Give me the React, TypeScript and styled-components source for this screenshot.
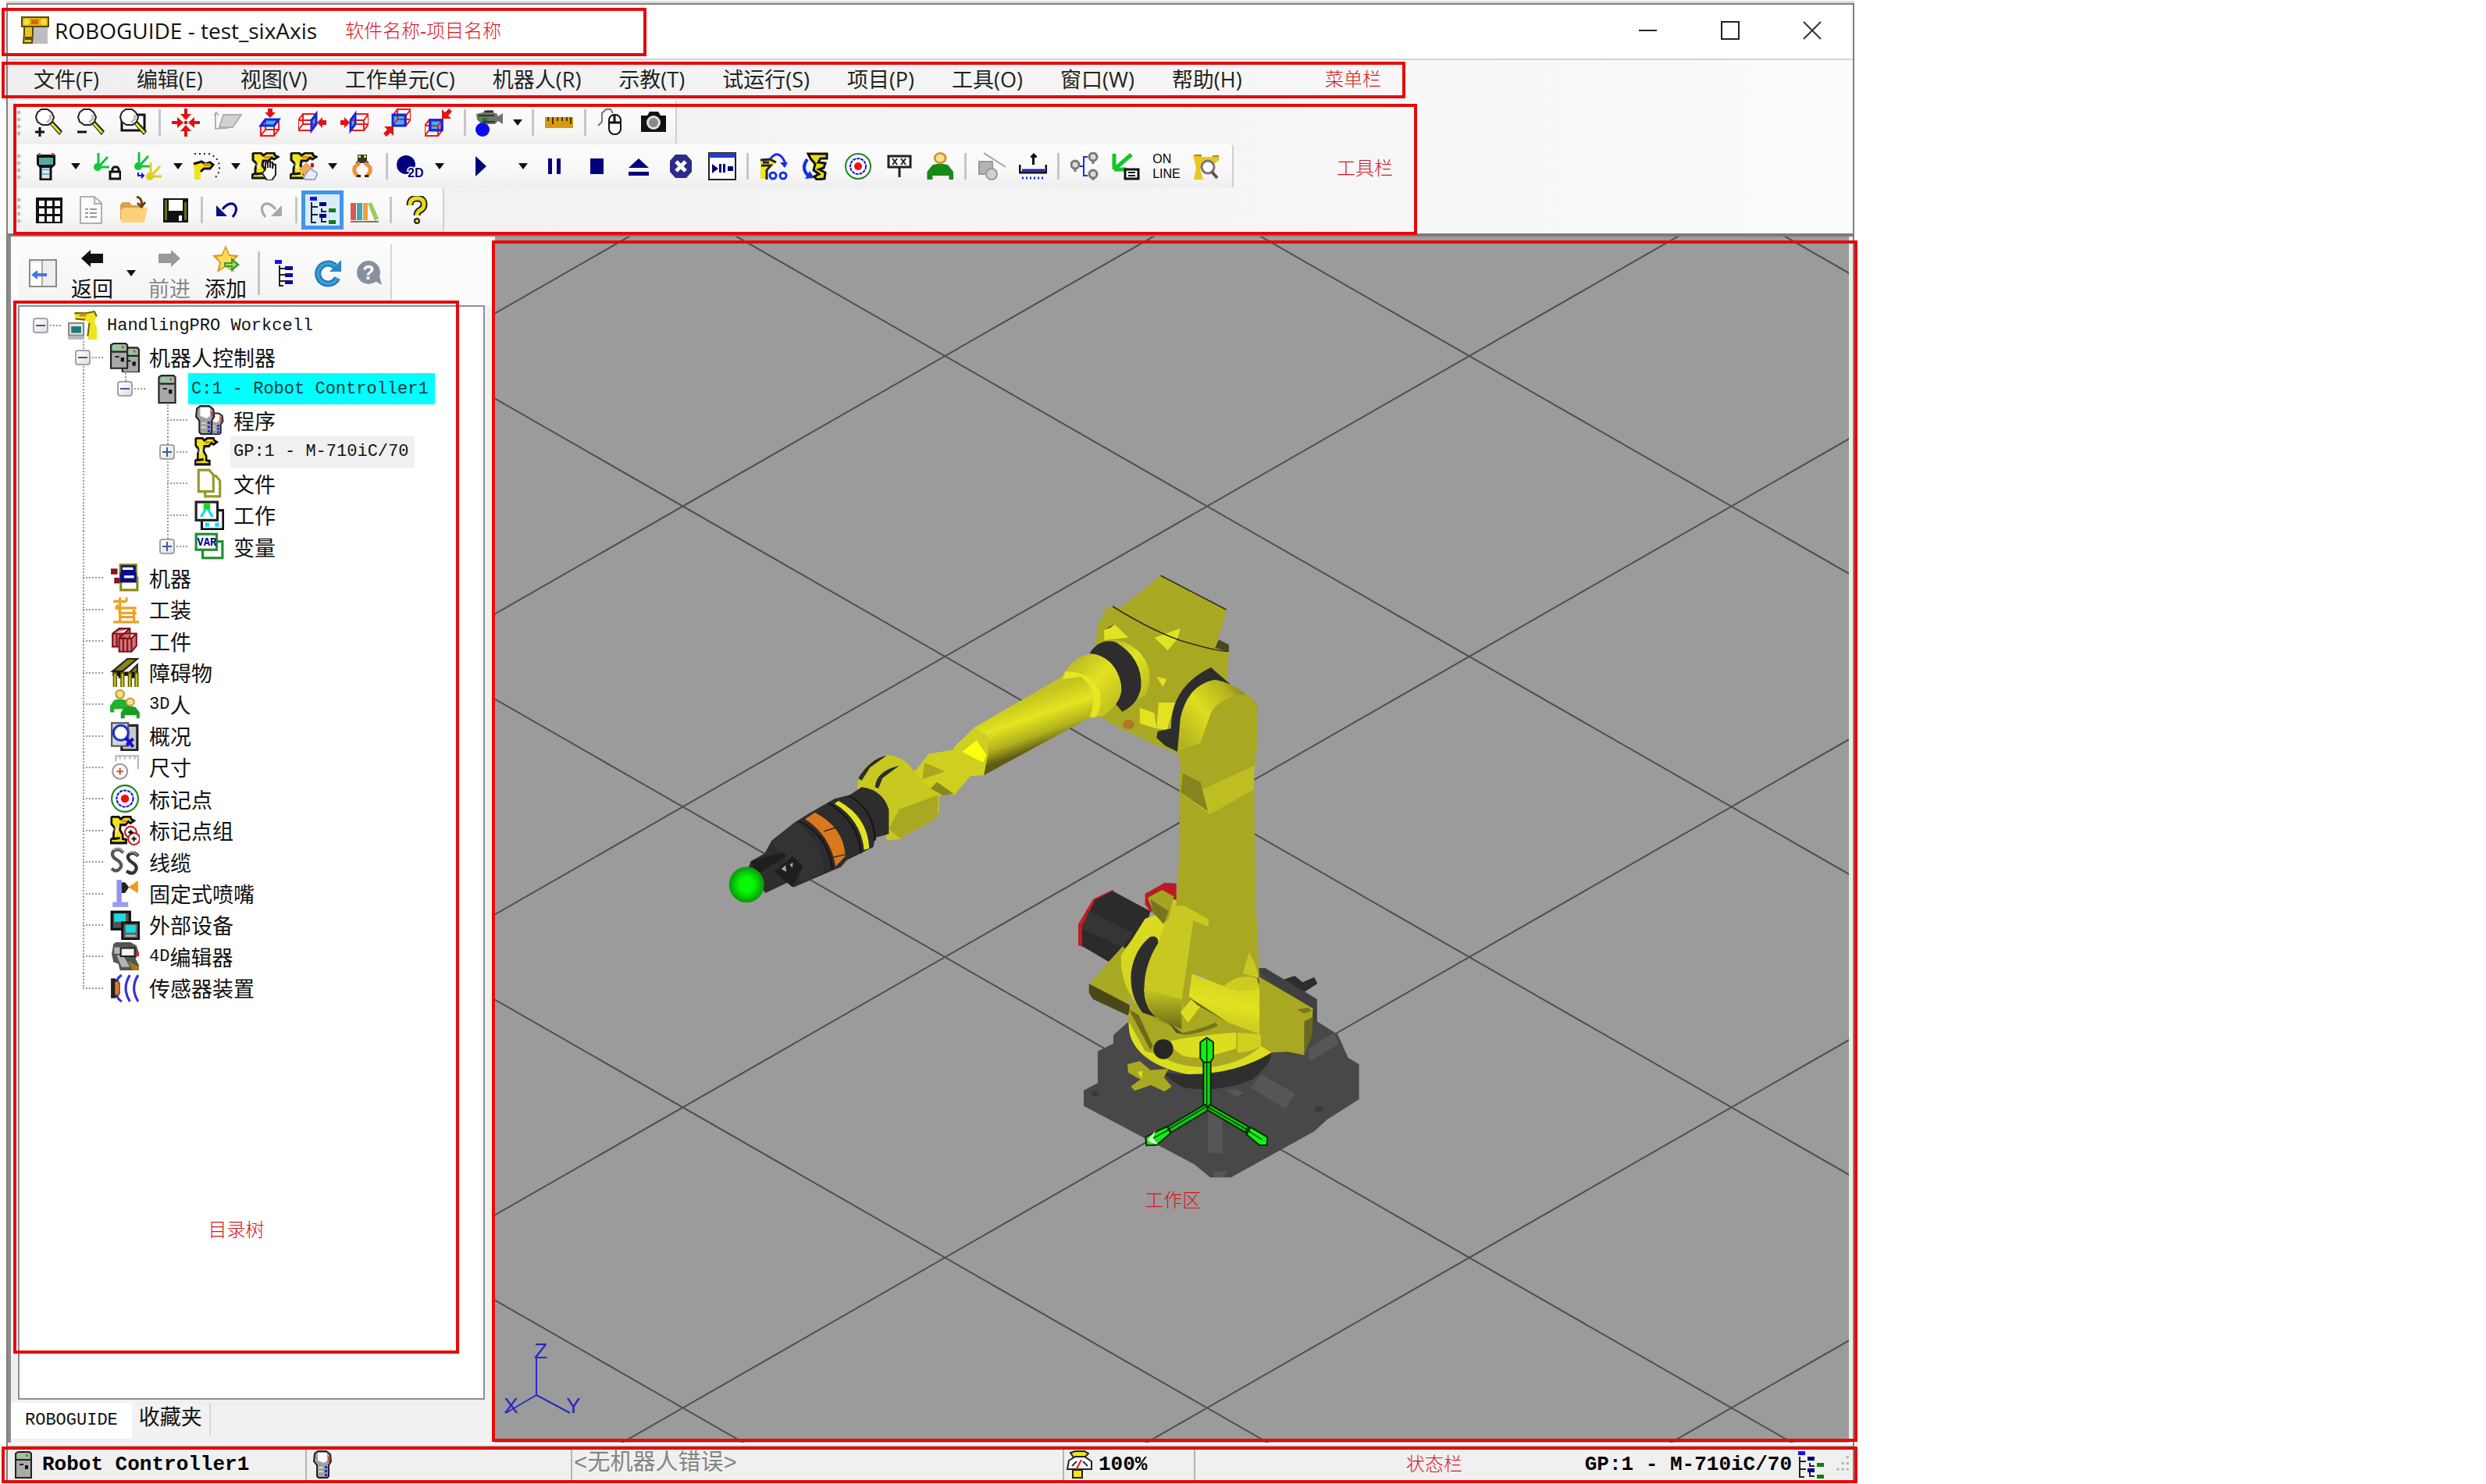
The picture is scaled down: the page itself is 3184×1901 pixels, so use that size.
import React, { ReactNode } from "react";
import styled, { createGlobalStyle, css } from "styled-components";

const UI = `"Open Sans", "Noto Sans CJK SC", sans-serif`;
const FIXED = `"Liberation Mono", "Noto Sans CJK SC", monospace`;
const RED = "#e60a0a";

const Global = createGlobalStyle`
  *, *::before, *::after { box-sizing: border-box; }
  body { margin: 0; background: #fff; overflow: hidden; }
  button { border: 0; padding: 0; margin: 0; background: none; font: inherit; color: inherit; cursor: pointer; }
  ul { list-style: none; margin: 0; padding: 0; }
`;

/* ---------- window frame ---------- */

const Desktop = styled.div`
  min-height: 100vh;
  padding: 4px 809px 2px 8px;
  display: flex;
  background: #fff;
  color: #1a1a1a;
  font-family: ${UI};
`;

const AppWindow = styled.div`
  flex: 1;
  min-width: 0;
  display: flex;
  flex-direction: column;
  border: 2px solid #7f7f7f;
  border-bottom: 0;
  box-shadow: 0 -3px 0 #dedede;
`;

const Callout = styled.div<{ $t?: number; $l?: number; $r?: number; $b?: number; $w?: number; $h?: number }>`
  position: absolute;
  pointer-events: none;
  border: 4px solid ${RED};
  z-index: 2;
  ${(p) => p.$t !== undefined && css`top: ${p.$t}px;`}
  ${(p) => p.$l !== undefined && css`left: ${p.$l}px;`}
  ${(p) => p.$r !== undefined && css`right: ${p.$r}px;`}
  ${(p) => p.$b !== undefined && css`bottom: ${p.$b}px;`}
  ${(p) => p.$w !== undefined && css`width: ${p.$w}px;`}
  ${(p) => p.$h !== undefined && css`height: ${p.$h}px;`}
`;

const CalloutText = styled.span`
  font-family: "Liberation Serif", "Noto Sans CJK SC", serif;
  font-weight: 300;
  font-size: 24px;
  line-height: 28px;
  color: #d8141c;
  white-space: nowrap;
`;

const CalloutRow = styled(Callout)<{ $pad: number }>`
  display: flex;
  justify-content: flex-end;
  align-items: center;
  padding: 0 ${(p) => p.$pad}px 2px 0;
`;

const CalloutColumn = styled(Callout)<{ $pad: number }>`
  display: flex;
  justify-content: center;
  align-items: flex-end;
  padding-bottom: ${(p) => p.$pad}px;
`;

const TitleBar = styled.header`
  position: relative;
  display: flex;
  align-items: center;
  height: 71px;
  padding: 0 0 4px 17px;
  gap: 7px;
  border-bottom: 2px solid #d4d4d4;
  background: #fff;
`;

const Title = styled.h1`
  margin: 0;
  font-size: 28px;
  font-weight: 400;
  line-height: 40px;
  color: #111;
`;

const WindowButtons = styled.div`
  margin-left: auto;
  display: flex;
`;

const WindowButton = styled.button`
  width: 105px;
  height: 64px;
  display: flex;
  align-items: center;
  justify-content: center;
`;

const Chrome = styled.div`
  position: relative;
  padding-bottom: 2px;
  background: linear-gradient(90deg, #efefef, #f6f6f6 70%, #fbfbfb);
  border-bottom: 4px solid #7c7c7c;
`;

const MenuBar = styled.nav`
  display: flex;
  height: 52px;
  padding: 0 0 2px 9px;
  align-items: center;
`;

const MenuButton = styled.button`
  padding: 0 24px;
  font-size: 27px;
  line-height: 40px;
  color: #222;
  white-space: nowrap;
`;

/* ---------- tool bars ---------- */

const ToolStrip = styled.div<{ $end?: number }>`
  display: flex;
  align-items: center;
  width: max-content;
  height: 56px;
  margin-left: 10px;
  padding-right: ${(p) => p.$end ?? 0}px;
  background: linear-gradient(180deg, #fcfcfc, #f8f8f8 60%, #eeeeee);
  border-right: 2px solid #cfcfcf;
  border-radius: 4px;
`;

const Grip = styled.span`
  width: 16px;
  height: 34px;
  background: radial-gradient(circle at 4px 4px, #bdbdbd 2px, transparent 3px) 0 0 / 16px 9px repeat-y;
`;

const ToolButton = styled.button<{ $w?: number; $active?: boolean }>`
  width: ${(p) => p.$w ?? 54}px;
  height: 50px;
  display: flex;
  align-items: center;
  justify-content: center;
  flex: none;
  ${(p) => p.$active && css`
    background: #dcebfa;
    border: 5px solid #3f97e8;
  `}
`;

const Divider = styled.span<{ $h?: number }>`
  width: 13px;
  height: ${(p) => p.$h ?? 34}px;
  flex: none;
  background: linear-gradient(#c6c6c6, #c6c6c6) center / 3px 100% no-repeat;
`;

const OnLine = styled.span`
  display: flex;
  flex-direction: column;
  align-items: flex-start;
  font-family: "Liberation Sans", sans-serif;
  font-size: 16px;
  line-height: 19px;
  color: #000;
`;

/* ---------- main area ---------- */

const Main = styled.main`
  flex: 1;
  display: flex;
  min-height: 0;
`;

const SidePanel = styled.aside`
  width: 620px;
  flex: none;
  display: flex;
  flex-direction: column;
  background: #f0f0f0;
  border-left: 4px solid #8c8c8c;
`;

const PanelHead = styled.div`
  height: 88px;
  padding: 10px 0 0 9px;
  background: #fcfcfc;
`;

const PanelStrip = styled.div`
  display: flex;
  align-items: center;
  width: max-content;
  height: 74px;
  padding-left: 5px;
  background: linear-gradient(180deg, #fcfcfc, #f4f4f4);
  border-right: 2px solid #d6d6d6;
`;

const LabeledButton = styled.button<{ $muted?: boolean }>`
  width: 72px;
  height: 72px;
  display: flex;
  flex-direction: column;
  align-items: center;
  justify-content: space-between;
  font-size: 27px;
  line-height: 32px;
  color: ${(p) => (p.$muted ? "#8a8a8a" : "#111")};
`;

const TreeBox = styled.div`
  position: relative;
  flex: 1;
  margin: 0 9px;
  padding-top: 4px;
  border: 2px solid #8b9098;
  background: #fff;
`;

const Tree = styled.ul`
  display: grid;
  grid-auto-rows: 1fr;
  height: 889px;
`;

const TreeRow = styled.li`
  display: flex;
  align-items: center;
  min-height: 0;
`;

const dotsV = "repeating-linear-gradient(180deg, #9a9a9a 0 2px, transparent 2px 4px)";
const dotsH = "repeating-linear-gradient(90deg, #9a9a9a 0 2px, transparent 2px 4px)";

const Rail = styled.span<{ $v: "none" | "full" | "half"; $h?: boolean }>`
  width: 54px;
  align-self: stretch;
  flex: none;
  display: flex;
  align-items: center;
  justify-content: center;
  background-repeat: no-repeat;
  background-image: ${(p) => (p.$v === "none" ? "none" : dotsV)}, ${(p) => (p.$h ? dotsH : "none")};
  background-size: 2px ${(p) => (p.$v === "full" ? "100%" : "50%")}, 50% 2px;
  background-position: 27px 0, right center;
`;

const Expander = styled.button`
  width: 20px;
  height: 20px;
  display: flex;
  align-items: center;
  justify-content: center;
  border: 2px solid #a4a4a4;
  border-radius: 4px;
  background: linear-gradient(135deg, #fff, #dfdfdf);
`;

const TreeIcon = styled.span`
  width: 54px;
  height: 38px;
  flex: none;
  display: flex;
  align-items: center;
  justify-content: center;
`;

const TreeLabel = styled.span<{ $tone?: "sel" | "soft" }>`
  display: flex;
  align-items: center;
  align-self: stretch;
  padding: 0 8px 0 4px;
  font-family: ${FIXED};
  font-size: 27px;
  color: ${(p) => (p.$tone === "sel" ? "#0c3a3a" : "#111")};
  white-space: pre;
  background: ${(p) => (p.$tone === "sel" ? "#00ffff" : p.$tone === "soft" ? "#f0f0f0" : "transparent")};
`;

const Latin = styled.span`
  font-size: 22px;
`;

const Tabs = styled.div`
  display: flex;
  height: 55px;
  padding-top: 4px;
  align-items: flex-start;
`;

const Tab = styled.button<{ $on?: boolean }>`
  height: ${(p) => (p.$on ? 46 : 42)}px;
  padding: 0 ${(p) => (p.$on ? 18 : 9)}px;
  font-family: ${FIXED};
  font-size: ${(p) => (p.$on ? 22 : 27)}px;
  line-height: 36px;
  color: #111;
  background: ${(p) => (p.$on ? "#fff" : "#f2f2f2")};
  border-right: ${(p) => (p.$on ? 0 : 2)}px solid #d8d8d8;
`;

const Workspace = styled.section`
  position: relative;
  flex: 1;
  min-width: 0;
  display: flex;
  background: #9b9b9b;
  border-left: 4px solid #f4f4f4;
  border-right: 5px solid #ececec;
`;

const Scene = styled.svg`
  flex: 1;
  min-width: 0;
  display: block;
`;

/* ---------- status bar ---------- */

const StatusBar = styled.footer`
  position: relative;
  display: flex;
  height: 51px;
  padding: 2px 0 2px;
  background: #f0f0f0;
  border-top: 2px solid #f8f8f8;
`;

const StatusCell = styled.div<{ $w?: number; $dim?: boolean }>`
  ${(p) => (p.$w ? css`width: ${p.$w}px;` : css`flex: 1; justify-content: flex-end;`)}
  display: flex;
  align-items: center;
  gap: 6px;
  padding-left: 2px;
  border-top: 2px solid #b4b4b4;
  border-right: 2px solid ${(p) => (p.$w ? "#b4b4b4" : "transparent")};
  font-family: ${FIXED};
  font-size: ${(p) => (p.$dim ? 29 : 26)}px;
  font-weight: ${(p) => (p.$dim ? 400 : 700)};
  line-height: 36px;
  color: ${(p) => (p.$dim ? "#848484" : "#000")};
  white-space: pre;
`;

/* ---------- icons ---------- */

const box = (x: number, y: number, w: number, h: number, f: string, s?: string, sw = 2) => (
  <rect x={x} y={y} width={w} height={h} fill={f} stroke={s} strokeWidth={s ? sw : undefined} />
);
const line = (d: string, s = "#000", w = 2, f = "none") => <path d={d} stroke={s} strokeWidth={w} fill={f} />;
const fill = (d: string, f: string) => <path d={d} fill={f} />;

const lens = (
  <>
    <path d="M17 18l5-3 13 14-4 5z" fill="#222" />
    <path d="M20 20l2-2 11 12-2 2z" fill="#f2ea18" />
    <path d="M8 1h8l5 4 3 6-2 6-5 4H9l-6-4-2-6 2-6z" fill="#fff" stroke="#222" strokeWidth="2" />
    <path d="M19 8l1 5-5 5" stroke="#bbb" strokeWidth="3" fill="none" />
  </>
);

const miniBot = (
  <>
    <path d="M2 2l2-1h8l3 3 5-3h9l1 3 4 2-5 3-3-2-4 4h-7l-1 6 4 6v5l5 1v4H1v-4l4-2v-6l2-6-5-5z" fill="#f0e41c" stroke="#111" strokeWidth="3" />
    <path d="M16 5h8v3h-8z" fill="#e58a18" />
    <path d="M7 12l5 3-2 6-4-2z" fill="#fff" opacity=".5" />
    <path d="M5 28l9-1" stroke="#111" strokeWidth="3" />
  </>
);

const cube = (x: number, y: number, face: "top" | "right" | "left" | "back" | "mid") => {
  const f = {
    top: "M0 8l6-8h17l-6 8z",
    right: "M17 8l6-8v13l-6 8z",
    left: "M0 8l6-8v13l-6 8z",
    back: "M0 7h16v14H0z",
    mid: "M7 1h15v13H7z",
  }[face];
  return (
    <g transform={`translate(${x} ${y})`}>
      <path d={f} fill="#39b4ff" />
      <path d="M0 8h17v13H0zM6 0h17v13H6zM0 8l6-8M17 8l6-8M17 21l6-8M0 21l6-8" stroke="#f01818" strokeWidth="2" fill="none" />
      <path d={f} stroke="#1226e0" strokeWidth="3" fill="none" />
    </g>
  );
};

const cabinet = (x: number, y: number, h = 30) => (
  <g transform={`translate(${x} ${y})`}>
    <path d={`M1 3l3-2h15l2 2v${h}H1z`} fill="#a9a9a9" stroke="#222" strokeWidth="2" />
    <rect x="4" y="3" width="14" height="6" fill="#8ccf9a" />
    <rect x="14" y="4" width="3" height="3" fill="#e04848" />
    <path d="M2 11h18M6 17h5" stroke="#222" strokeWidth="2" />
    <rect x="13" y="18" width="4" height="5" fill="#111" />
  </g>
);

const pendant = (x: number, y: number) => (
  <g transform={`translate(${x} ${y})`}>
    <path d="M2 4l4-3h11l5 4 1 9-3 5v14l-2 2H7l-2-2V19l-4-5z" fill="#a0a0a0" stroke="#222" strokeWidth="2" />
    <path d="M6 3h12v10l-4 3-8-3z" fill="#fff" />
    <path d="M19 7l4 4-3 5z" fill="#e02828" />
    <path d="M15 20h3v3h-3zM15 25h3v3h-3zM15 30h3v3h-3z" fill="#2222e8" />
    <path d="M7 22h6M7 27h6" stroke="#d8d8d8" strokeWidth="2" />
  </g>
);

const person = (x: number, y: number, c = "#168a16") => (
  <g transform={`translate(${x} ${y})`}>
    <path d="M0 28v-8l5-7 4-1h6l4 1 5 7v8h-4v-4H5v4z" fill={c} />
    <circle cx="12" cy="6" r="5" fill="#ffe08a" stroke="#c89434" strokeWidth="2" />
  </g>
);

const treeGlyph = (
  <>
    <path d="M4 8v26h6M4 14h8M4 24h8M17 16v4h6M17 26v7h6" stroke="#222" strokeWidth="2" fill="none" />
    {box(2, 1, 9, 5, "#1414e8")}
    {box(14, 8, 9, 5, "#00008a")}
    {box(26, 16, 9, 5, "#108010")}
    {box(14, 23, 9, 5, "#00008a")}
    {box(26, 31, 9, 5, "#108010")}
  </>
);

const frame3 = (x: number, y: number, c: string) => (
  <g transform={`translate(${x} ${y})`}>
    <path d="M7 18V0M7 18L19 5M7 18h14" stroke={c} strokeWidth="3" fill="none" />
    <circle cx="6" cy="18" r="5" fill={c} />
  </g>
);

const target = (
  <>
    <circle cx="18" cy="18" r="16" fill="#fff" stroke="#168a16" strokeWidth="2" />
    <circle cx="18" cy="18" r="10" fill="none" stroke="#1414e0" strokeWidth="2" strokeDasharray="4 1" />
    <circle cx="18" cy="18" r="5" fill="#f01010" />
  </>
);

const icons: Record<string, ReactNode> = {
  logo: (
    <>
      {box(10, 5, 24, 30, "#bdbdbd")}
      {box(1, 1, 34, 12, "#e0b414", "#5c4a10")}
      {box(13, 4, 9, 6, "#d06a10")}
      <circle cx="7" cy="7" r="4" fill="#f8dc3c" />
      <circle cx="29" cy="7" r="4" fill="#f8dc3c" />
      <path d="M4 13h11v9l-1 12H3l1-12z" fill="#e8c81c" stroke="#5c4a10" strokeWidth="2" />
      {box(5, 26, 9, 4, "#5c4a10")}
    </>
  ),
  zoomIn: <>{lens}{line("M0 30h12M6 24v12", "#111", 3)}</>,
  zoomOut: <>{lens}{line("M0 30h12", "#111", 3)}</>,
  zoomWin: <>{box(3, 8, 29, 20, "#fff", "#111", 3)}{lens}</>,
  center: fill("M16 0h4v7h5l-7 8-7-8h5zM16 36h4v-7h5l-7-8-7 8h5zM0 16v4h7v5l8-7-8-7v5zM36 16v4h-7v5l-8-7 8-7v5zM16 16h4v4h-4z", "#d81414"),
  plane: <>{fill("M12 8h24L24 24H6z", "#d2d2d2")}{line("M12 8h23L24 24H7zM2 6v20l16-1M0 9l3-4 3 4", "#b0b0b0")}</>,
  vTop: <>{fill("M15 0h6v5h4l-7 7-7-7h4z", "#e01414")}{cube(6, 14, "top")}</>,
  vRight: <>{cube(0, 7, "right")}{fill("M36 15v6h-5v4l-7-7 7-7v4z", "#e01414")}</>,
  vLeft: <>{cube(13, 7, "left")}{fill("M0 15v6h5v4l7-7-7-7v4z", "#e01414")}</>,
  vFront: <>{cube(13, 1, "back")}{fill("M2 23h12v12l-4-4-5 5-4-4 5-5z", "#e01414")}</>,
  vBack: <>{cube(0, 14, "mid")}{fill("M34 13H22V1l4 4 5-5 4 4-5 5z", "#e01414")}</>,
  cam: (
    <>
      {fill("M2 7l9-2 3-3h9l2 4h3l2 4 6-4v14l-6-4-4 4H9l-6-6z", "#6c7468")}
      {line("M12 4h12M5 9h20M10 17h16", "#333")}
      {fill("M10 12h6v4h-6z", "#1c7a1c")}
      <circle cx="10" cy="27" r="9" fill="#0a0af0" />
    </>
  ),
  ruler: <>{box(0, 11, 36, 14, "#d69a10")}{line("M4 11v5M10 11v9M16 11v5M22 11v5M28 11v5M33 11v9", "#4a3408")}</>,
  mouse: <>{line("M1 22l5-5V6l5-5h6l3 5", "#777")}<rect x="15" y="8" width="15" height="25" rx="7" fill="#fff" stroke="#111" strokeWidth="2" />{line("M15 18h15M22 8v10", "#111", 3)}</>,
  photo: <>{fill("M2 9h8l3-5h11l3 5h7v21H2z", "#111")}<circle cx="18" cy="18" r="9" fill="#ddd" /><circle cx="18" cy="18" r="6" fill="#8a8a8a" /></>,
  tp: (
    <>
      {box(10, 17, 13, 18, "#cfe8f4", "#111", 3)}
      {line("M12 22h9M12 28h9", "#8ab")}
      {fill("M5 3h24v13l-4 4H9l-4-4z", "#111")}
      {box(8, 7, 18, 9, "#5aa8a4")}
      {box(24, 1, 3, 3, "#e03030")}
      {box(7, 1, 3, 3, "#777")}
    </>
  ),
  lockFrame: <>{frame3(0, 1, "#10c83c")}{line("M25 25v-4l2-2h4l2 2v4", "#111", 3)}{box(22, 25, 13, 9, "#fff", "#111", 3)}</>,
  twoFrames: <>{frame3(0, 0, "#10c83c")}{frame3(15, 13, "#dcd21c")}{line("M6 26v4h7M10 27l3 3-3 3", "#1414e0")}</>,
  arc: <><path d="M2 2h18q14 4 14 18 0 8-7 14" stroke="#222" strokeWidth="2" strokeDasharray="2 4" fill="none" /><path d="M1 16l10-3 12 1 4 4-5 3h-8l-4 4v10H2V24l-1-4z" fill="#f0e41c" />{line("M1 15l10-3 5 3 6-2 4 3-4 5h-8l-4 4", "#111", 3)}{box(14, 14, 8, 4, "#e58a18")}</>,
  hand: <>{miniBot}<path d="M18 22V14l3-1v7-8h3v8-7h3v8l1-6 3 1v13l-5 7h-6l-6-9z" fill="#fff" stroke="#222" strokeWidth="2" /></>,
  carry: <>{miniBot}<path d="M12 22l9-9 9 7-9 12z" fill="#f0a860" /><path d="M18 32l8-11 10 6-4 8H20z" fill="#e8ecff" stroke="#98a4d8" strokeWidth="2" />{box(27, 14, 4, 5, "#d01414")}</>,
  gripper: <>{fill("M12 3h12v8l3 3H9l3-3z", "#333")}{fill("M13 4h3v3h-3zM20 4h3v3h-3z", "#f0e41c")}<path d="M15 14q-9 4-7 11l4 6M21 14q9 4 7 11l-4 6" stroke="#f09038" strokeWidth="5" fill="none" />{box(11, 29, 5, 3, "#222")}{box(21, 29, 5, 3, "#222")}</>,
  blob2d: <><circle cx="12" cy="16" r="12" fill="#00007c" /><text x="14" y="32" fontSize="16" fontWeight="700" fontFamily="Liberation Sans, sans-serif" fill="#00007c" stroke="#fff" strokeWidth="3" paintOrder="stroke">2D</text></>,
  play: fill("M11 5l14 13-14 13z", "#00007c"),
  pause: fill("M10 8h5v20h-5zM21 8h5v20h-5z", "#00007c"),
  stop: box(10, 8, 17, 20, "#00007c"),
  eject: fill("M18 8l13 12H5zM5 25h26v5H5z", "#00007c"),
  abort: <>{fill("M11 3h14l7 8v14l-7 8H11l-7-8V11z", "#2c2c8a")}{line("M12 12l12 12M24 12L12 24", "#fff", 5)}</>,
  runPanel: <>{box(1, 1, 34, 34, "#fff", "#222")}{box(1, 1, 34, 6, "#2440c8")}{fill("M5 15l8 6-8 6zM14 15h3v11h-3zM19 15h3v11h-3zM25 18h7v6h-7z", "#00007c")}</>,
  jog1: <>{fill("M1 11l13-1 6 4-5 5H8v15H1z", "#f0e41c")}{line("M1 10l12-1 8 4M2 17h12l-5 6v12M4 13h8", "#222", 3)}<path d="M14 8q10-12 18 4v6" stroke="#1430e8" strokeWidth="3" fill="none" />{fill("M26 13h10l-4 7z", "#1430e8")}<circle cx="17" cy="30" r="4" fill="#fff" stroke="#1430e8" strokeWidth="3" /><circle cx="30" cy="30" r="4" fill="#fff" stroke="#1430e8" strokeWidth="3" /></>,
  jog2: <>{line("M7 9q-9 12 2 22", "#1430e8", 4)}{fill("M4 34l12-1-6-9z", "#1430e8")}<path d="M8 2h24v6h-8l-3 5 9 1-2 6-6 2 8 4-1 8-10 1-3-4 6-3-7-5 2-8-6-7z" fill="#e8dc1c" stroke="#111" strokeWidth="3" /></>,
  target,
  sign: <>{box(4, 5, 28, 14, "#fff", "#222", 3)}{line("M9 8l6 8M15 8l-6 8M20 8l6 8M26 8l-6 8", "#222")}{line("M18 19v13", "#222", 3)}</>,
  person: <g transform="scale(1.4 1.25)">{person(1, 0)}</g>,
  shapes: <>{box(2, 12, 17, 16, "#b4b4b4", "#999")}<circle cx="18" cy="28" r="7" fill="#d0d0d0" stroke="#999" strokeWidth="2" />{line("M8 1l28 18", "#a4a4a4")}</>,
  measure: <>{fill("M15 5l4-4 4 4v2h-3v9h-3V7h-2z", "#111")}{line("M1 16v10h34V16", "#111", 3)}{line("M4 23h29", "#2222a8", 3)}<path d="M4 33h30" stroke="#1430e8" strokeWidth="3" strokeDasharray="2 3" /></>,
  links: <>{line("M22 6h-5v24h5M17 18h-5", "#2030d8")}{[[6, 16], [29, 6], [29, 28]].map(([x, y]) => <g key={x + y}><circle cx={x} cy={y} r="5" fill="#ddd" stroke="#777" strokeWidth="3" /><path d={`M${x} ${y + 4}v5`} stroke="#777" strokeWidth="3" /></g>)}</>,
  frameKey: <>{line("M3 2v20M3 22L25 3M3 22h16", "#12c822", 5)}{box(17, 22, 17, 12, "#fff", "#111", 3)}{line("M21 26h9M21 30h9", "#111")}</>,
  botFind: <>{fill("M1 3h9l3 3h12l8-3 2 7-6 4H14l-4 8 4 13H2l3-15z", "#e8c81c")}{line("M3 4h9M26 5h8", "#a88a10")}<circle cx="20" cy="19" r="8" fill="#fff" stroke="#777" strokeWidth="3" />{line("M25 25l7 8", "#555", 4)}</>,
  grid: <>{box(1, 2, 34, 33, "#111")}{[5, 15, 25].map((y) => [5, 15, 25].map((x) => <rect key={x + y * 9} x={x} y={y + 1} width="7" height="7" fill="#fff" />))}</>,
  doc: <>{line("M4 1h18l9 8v26H4zM22 1v9h9", "#b0b0b0", 2, "#fdfdfd")}{line("M10 17h4M16 17h9M10 22h4M16 22h9M10 27h4M16 27h9", "#9a9a9a")}</>,
  open: <>{fill("M1 11l3-3h9l3 4h15v8H5l-4 12z", "#dca048")}{fill("M2 34V18l4-3h30l-4 19z", "#ffd078")}{line("M22 1q8 2 6 12M23 9l5 5 5-6", "#6a4410", 3)}</>,
  save: <>{box(2, 3, 32, 31, "#111")}{box(9, 5, 18, 14, "#fff")}{fill("M4 5h3v26H4zM29 8h3v23h-3z", "#6c6c14")}{box(9, 24, 18, 9, "#111")}{box(22, 25, 4, 7, "#fff")}</>,
  undo: <>{fill("M3 12v14h14z", "#0c0c80")}{line("M11 17q8-10 15-6 6 6-2 16", "#0c0c80", 3)}</>,
  redo: <>{fill("M33 12v14H19z", "#a8a8a8")}{line("M25 17q-8-10-15-6-6 6 2 16", "#a8a8a8", 3)}</>,
  tree: treeGlyph,
  books: <>{box(0, 9, 7, 22, "#d85858")}{box(8, 9, 7, 22, "#40a8b0")}{box(16, 9, 6, 22, "#f0a038")}{fill("M22 10l5-2 9 21-5 3z", "#9ccc60")}{line("M0 33h36", "#8a7468")}</>,
  help: <>{line("M9 12q0-9 9-9t9 8q0 5-6 8-3 2-3 6", "#222", 9)}{line("M9 12q0-9 9-9t9 8q0 5-6 8-3 2-3 6", "#e8dc1c", 5)}<circle cx="18" cy="32" r="4" fill="#222" /><circle cx="18" cy="32" r="2" fill="#e8dc1c" /></>,
  dock: <>{box(1, 1, 34, 34, "#eee", "#8a8a8a")}{box(2, 5, 15, 29, "#fff")}{line("M17 2v32", "#aaa")}{fill("M3 20l8-6v4h12v4H11v4z", "#3c78e8")}</>,
  star: <>{fill("M18 0l5 12 12 1-9 9 3 13-11-7-11 7 3-13-9-9 12-1z", "#d89a1c")}{fill("M18 4l4 10 8 1-6 7 2 9-8-5-8 5 2-9-6-7 8-1z", "#ffdc5c")}{fill("M16 22h9v-6l11 9-11 9v-6h-9z", "#3c9c2c")}{fill("M18 24h9v-3l5 4-5 4v-3h-9z", "#9ce070")}</>,
  list: <>{line("M11 8v26h5M11 12h8M11 20h8M11 28h8", "#222")}{box(5, 1, 9, 5, "#1414e8")}{box(18, 9, 10, 5, "#0c0ca0")}{box(18, 18, 10, 5, "#0c0ca0")}{box(18, 27, 10, 5, "#0c0ca0")}</>,
  refresh: <>{line("M28 9a13 13 0 1 0 3 15", "#1878b8", 8)}{line("M28 9a13 13 0 1 0 3 15", "#3c9cd8", 4)}{fill("M36 1v15H21z", "#2888c8")}</>,
  about: <><circle cx="17" cy="17" r="15" fill="#8890a0" /><path d="M24 27l10 6-3-11z" fill="#8890a0" /><text x="17" y="26" textAnchor="middle" fontSize="25" fontWeight="700" fontFamily="Liberation Sans, sans-serif" fill="#fff">?</text></>,
  workcell: <>{fill("M8 3h14l10-2 3 5-3 8 3 6v15H24l3-18-6-6-12-1z", "#f0e41c")}{line("M8 3h14l10-2 3 6M9 10l12 1M26 15l-2 16", "#6a6414")}{box(14, 3, 8, 4, "#d88818")}{box(1, 15, 18, 15, "#e4e4e4", "#888")}{box(4, 19, 12, 8, "#1c7c7c")}{box(0, 31, 20, 4, "#bbb")}</>,
  controllers: <>{cabinet(14, 5, 28)}{cabinet(0, 0, 28)}</>,
  cabinet: cabinet(7, 1, 31),
  programs: <><g transform="translate(14 9) scale(.9 .75)">{pendant(0, 0)}</g>{pendant(1, 0)}</>,
  pendant: pendant(6, 0),
  bot: <g transform="scale(.8 1)">{miniBot}</g>,
  files: <>{line("M13 9h13l5 6v19H13z", "#98982c", 3, "#fff")}{line("M5 2h13l5 6v20H5z", "#98982c", 3, "#fff")}</>,
  jobs: <>{box(9, 12, 26, 23, "#fff", "#111", 3)}{box(13, 27, 5, 5, "#10dcec")}{box(25, 27, 5, 5, "#10dcec")}{box(2, 2, 26, 22, "#fff", "#222", 3)}{line("M15 8l-7 12M15 8l7 12", "#10dcec", 3)}{box(11, 4, 8, 7, "#10e010")}</>,
  vars: <>{box(10, 12, 24, 20, "#fff", "#1c9030", 3)}{box(2, 3, 25, 19, "#fff", "#1c9030", 3)}<text x="15" y="17" textAnchor="middle" fontSize="13" fontWeight="700" fontFamily="Liberation Mono, monospace" fill="#00008a">VAR</text></>,
  machine: <>{box(1, 7, 8, 7, "#8a1414")}{box(5, 18, 8, 7, "#8a1414")}{box(12, 2, 20, 16, "#0c0c8a", "#8a8a14")}{box(13, 18, 20, 15, "#fff", "#8a8a14", 3)}{box(12, 12, 20, 12, "#0c0c8a")}{line("M15 7h13M17 17h12", "#fff", 3)}</>,
  fixture: line("M4 8h16M12 3v30M6 16h26M10 22h22M4 33h31M29 18v15M20 8v-5M12 27h17M8 12l4 8", "#f0a020", 3),
  part: <>{line("M3 9l8-6h13v15l-7 7H3zM3 9h14l7-6M17 9v16M8 10v14M12 10v14", "#7c1418", 2, "#d87078")}{line("M11 15l6-6h15v15l-6 7H11zM11 15h15l6-6M26 15v16M16 16v14M21 16v14", "#7c1418", 2, "#d87078")}</>,
  obstacle: <>{line("M3 16L21 1h12L15 16zM21 20L33 8v10", "#222", 2, "#8a8414")}{line("M3 19h31M10 22h6M24 22h6", "#111", 5)}{line("M6 17v18M15 17v18M24 17v18M32 17v18", "#5c5808", 5)}{line("M6 19v16M15 19v16M24 19v16M32 19v16", "#d8cc20", 2)}</>,
  people: <>{person(0, 0, "#1cb42c")}<g transform="translate(13 10) scale(.95 .9)">{person(0, 0, "#1c9c24")}</g></>,
  profile: <>{box(14, 5, 19, 30, "#c8c8c8", "#222", 3)}{box(2, 2, 20, 28, "#d8d8d8", "#555")}<circle cx="13" cy="14" r="9" fill="#fff" stroke="#1c34d8" strokeWidth="3" />{line("M19 20l9 11M28 21l-8 8", "#1414c8", 4)}</>,
  dim: <>{line("M7 11V4h27v16M12 4v4M18 4v4M24 4v4M30 4v4", "#b0b4c8")}<circle cx="12" cy="23" r="9" fill="#fff" stroke="#999" strokeWidth="2" />{line("M8 23h8M12 19v8", "#d05038")}</>,
  targetGroup: <><g transform="scale(.85 1)">{miniBot}</g><circle cx="25" cy="20" r="7" fill="#fff" stroke="#d01818" strokeWidth="2" /><circle cx="29" cy="28" r="7" fill="#fff" stroke="#d01818" strokeWidth="2" />{line("M22 20h6M25 17v6M26 28h6M29 25v6", "#111")}</>,
  cable: <>{line("M16 7q-6-7-12-2-4 6 5 11 8 6 2 11-4 4-9-1", "#555", 4)}{line("M34 11q-5-6-11-2-4 5 4 10 8 5 3 11-4 4-10-1", "#333", 4)}{line("M16 6q-6-7-12-2M33 10q-5-6-10-2", "#ccc", 1)}</>,
  nozzle: <>{box(8, 1, 6, 30, "#9494f0")}{box(3, 28, 19, 6, "#9c9cf4")}{fill("M14 4h4l5 6-5 7h-4z", "#222")}{fill("M22 10l12-8v15z", "#f09c18")}</>,
  device: <>{box(2, 2, 22, 21, "#555", "#111", 3)}{box(5, 4, 14, 10, "#18dce4")}{box(15, 15, 20, 20, "#666", "#111", 3)}{box(19, 18, 12, 9, "#18dce4")}{line("M19 31h12", "#bbb")}</>,
  editor4d: <>{fill("M4 3l3-2h18l7 4 3 9-4 7 4 8v6H12l-2-8-6-2-2-10z", "#555")}{fill("M5 7h18v8H5zM8 17h8l8 14H14z", "#b4b4b4")}{box(13, 8, 17, 10, "#f4f4f4", "#222")}{fill("M22 24l13 7v4h-8z", "#a87818")}{box(31, 13, 4, 5, "#d02828")}</>,
  sensor: <>{fill("M1 6h5l6 5v14l-6 5H1z", "#222")}{fill("M6 10h5v16H6z", "#d87c2c")}{line("M14 2q-6 4-5 8M14 34q-6-4-5-8M24 2q-10 16 0 32M34 2q-10 16 0 32", "#3434d8", 3)}</>,
  status: <><path d="M6 3l6-2h12l5 3-5 5H10z" fill="#f0e41c" stroke="#222" strokeWidth="2" /><path d="M4 13l8-5h12l9 6v10H2z" fill="#fff" stroke="#222" strokeWidth="2" />{line("M8 20l6-6M28 20l-6-6", "#333")}{line("M20 12l-7 13", "#e01818", 2)}{box(9, 25, 12, 10, "#f0e41c", "#222")}</>,
  sizeGrip: fill("M28 4h4v4h-4zM20 14h4v4h-4zM28 14h4v4h-4zM12 24h4v4h-4zM20 24h4v4h-4zM28 24h4v4h-4z", "#b4b4b4"),
};

const Icon = ({ name, size = 36 }: { name: string; size?: number }) => (
  <svg width={size} height={size} viewBox="0 0 36 36" aria-hidden="true">{icons[name]}</svg>
);

const Caret = () => (
  <svg width="12" height="8" viewBox="0 0 12 8" aria-hidden="true"><path d="M0 0h12L6 8z" fill="#111" /></svg>
);

type Tool = [string, string, number?] | "|" | "v";

const strips: { tools: Tool[]; end: number }[] = [
  {
    end: 1,
    tools: [["zoomIn", "放大"], ["zoomOut", "缩小"], ["zoomWin", "窗口缩放"], "|", ["center", "居中"], ["plane", "平面"], ["vTop", "俯视"], ["vRight", "右视"], ["vLeft", "左视"], ["vFront", "前视"], ["vBack", "后视"], "|", ["cam", "相机", 47], "v", "|", ["ruler", "测量"], "|", ["mouse", "鼠标"], ["photo", "截图"]],
  },
  {
    end: 8,
    tools: [["tp", "示教器", 47], "v", ["lockFrame", "锁定坐标"], ["twoFrames", "坐标", 50], "v", ["arc", "点动", 47], "v", ["hand", "手动", 50], ["carry", "搬运", 47], "v", ["gripper", "手爪", 50], "|", ["blob2d", "2D", 47], "v", ["play", "启动", 80], "v", ["pause", "暂停"], ["stop", "停止"], ["eject", "弹出"], ["abort", "中止"], ["runPanel", "运行面板", 52], "|", ["jog1", "移动机器人"], ["jog2", "旋转机器人"], ["target", "目标"], ["sign", "标签", 52], ["person", "人", 52], "|", ["shapes", "形状"], ["measure", "尺寸", 52], "|", ["links", "链接"], ["frameKey", "坐标输入", 52], ["online", "在线", 52], ["botFind", "查找", 50]],
  },
  {
    end: 6,
    tools: [["grid", "表格"], ["doc", "新建"], ["open", "打开"], ["save", "保存"], "|", ["undo", "撤销"], ["redo", "重做"], "|", ["tree", "目录树"], ["books", "库"], "|", ["help", "帮助"]],
  },
];

const ToolItem = ({ tool }: { tool: Tool }) => {
  if (tool === "|") return <Divider />;
  if (tool === "v") return <ToolButton $w={27} aria-label="更多"><Caret /></ToolButton>;
  const [name, label, width] = tool;
  return (
    <ToolButton $w={width} $active={name === "tree"} aria-label={label}>
      {name === "online" ? <OnLine><span>ON</span><span>LINE</span></OnLine> : <Icon name={name} />}
    </ToolButton>
  );
};

/* ---------- tree data ---------- */

type Node = { d: number; icon: string; text: string; open?: boolean; closed?: boolean; last?: boolean; tone?: "sel" | "soft" };

const nodes: Node[] = [
  { d: 0, icon: "workcell", text: "HandlingPRO Workcell", open: true },
  { d: 1, icon: "controllers", text: "机器人控制器", open: true },
  { d: 2, icon: "cabinet", text: "C:1 - Robot Controller1", open: true, last: true, tone: "sel" },
  { d: 3, icon: "programs", text: "程序" },
  { d: 3, icon: "bot", text: "GP:1 - M-710iC/70", closed: true, tone: "soft" },
  { d: 3, icon: "files", text: "文件" },
  { d: 3, icon: "jobs", text: "工作" },
  { d: 3, icon: "vars", text: "变量", closed: true, last: true },
  { d: 1, icon: "machine", text: "机器" },
  { d: 1, icon: "fixture", text: "工装" },
  { d: 1, icon: "part", text: "工件" },
  { d: 1, icon: "obstacle", text: "障碍物" },
  { d: 1, icon: "people", text: "3D人" },
  { d: 1, icon: "profile", text: "概况" },
  { d: 1, icon: "dim", text: "尺寸" },
  { d: 1, icon: "target", text: "标记点" },
  { d: 1, icon: "targetGroup", text: "标记点组" },
  { d: 1, icon: "cable", text: "线缆" },
  { d: 1, icon: "nozzle", text: "固定式喷嘴" },
  { d: 1, icon: "device", text: "外部设备" },
  { d: 1, icon: "editor4d", text: "4D编辑器" },
  { d: 1, icon: "sensor", text: "传感器装置", last: true },
];

const splitScript = (text: string) =>
  text.split(/([\x20-\x7e]+)/).filter(Boolean).map((part, i) =>
    /[\x20-\x7e]/.test(part) ? <Latin key={i}>{part}</Latin> : <span key={i}>{part}</span>
  );

const railFor = (node: Node, level: number) => (level === 1 && node.d === 2 ? "full" : "none");

const TreeNode = ({ node }: { node: Node }) => (
  <TreeRow role="treeitem" aria-level={node.d + 1}>
    {Array.from({ length: node.d }, (_, i) => <Rail key={i} $v={i === 1 ? "full" : railFor(node, i)} />)}
    <Rail $v={node.d === 0 ? "none" : node.last ? "half" : "full"} $h>
      {(node.open || node.closed) && (
        <Expander aria-label={node.open ? "折叠" : "展开"}>
          <svg width="12" height="12" viewBox="0 0 12 12" aria-hidden="true">
            <path d={node.open ? "M0 6h12" : "M0 6h12M6 0v12"} stroke="#3c5c9c" strokeWidth="2" />
          </svg>
        </Expander>
      )}
    </Rail>
    <TreeIcon><Icon name={node.icon} size={38} /></TreeIcon>
    <TreeLabel $tone={node.tone}>{splitScript(node.text)}</TreeLabel>
  </TreeRow>
);

/* ---------- 3D scene ---------- */

const Y = "#a9a822";
const B = "#dddd20";
const D = "#2d2d2d";

const FloorLines = () => {
  const out: ReactNode[] = [];
  for (let k = -8; k <= 8; k++) {
    const y = 841 + k * 385;
    out.push(<path key={k} d={`M162 ${y - 601}L3258 ${y + 1174}M162 ${y + 601}L3258 ${y - 1174}`} />);
  }
  return <g stroke="#505050" strokeWidth="2" fill="none">{out}</g>;
};

const RobotBase = () => (
  <g transform="translate(1300 1080) scale(.3333)">
    <path d="M1030 525L1075 510L1105 535L1150 515L1162 540L1100 580Z" fill={D} />
    <path d="M378 738L432 690L940 480L960 480L1160 600V685L1240 735L1280 825L1322 850V985L1200 1062L1150 1108L830 1285H750L690 1235L264 1010V950L318 922V800L378 770Z" fill="#484848" />
    <path d="M940 490L960 480L1160 600V690L1120 690Z" fill="#404040" />
    <path d="M905 940L945 888L1075 962L1040 1022ZM742 1030H797V1192H742ZM1128 830V790L1225 728L1245 772L1140 835ZM810 950L850 945L880 960L850 975ZM762 1262H818L800 1284H765Z" fill="#565656" />
    <ellipse cx="308" cy="962" rx="16" ry="10" fill="#3a3a3a" /><ellipse cx="1168" cy="1022" rx="16" ry="12" fill="#3a3a3a" />
    <path d="M570 880Q780 920 985 808Q985 850 910 910Q780 962 650 940Q600 920 570 880Z" fill="#2f2f2f" />
    <path d="M375 180L300 215L243 312V392L262 400L390 200Z" fill="#c01c24" />
    <path d="M375 184L308 218L258 320V396L360 456L500 340L520 262Z" fill="#2b2b2b" />
    <path d="M283 262L455 345L415 400L258 330Z" fill="#353535" />
    <path d="M500 195L575 152L620 155V230L520 265L500 235Z" fill="#b81c22" />
    <path d="M415 395L360 456L286 540L435 625L460 500Z" fill={Y} />
    <path d="M284 540L440 622L440 665L300 600L284 575Z" fill="#4b4818" />
    <path d="M435 660Q430 730 465 785Q520 860 660 885Q840 890 985 805L1100 700L940 540L700 520L450 600Z" fill={Y} />
    <path d="M440 690Q430 740 470 790Q530 862 660 888Q850 890 985 805L945 780Q870 850 740 862Q620 862 560 815L500 800Z" fill={B} />
    <path d="M600 760Q720 735 850 728L850 790L770 812Q690 835 640 815L610 790Z" fill={B} />
    <path d="M855 728L945 735L945 780Q900 805 855 805Z" fill="#cfcf20" />
    <path d="M438 640L475 660L530 780L520 795Z" fill="#6e6b1c" />
    <path d="M500 290L560 270L610 215L745 295L690 320L635 712Q540 690 480 640Q400 540 408 430L450 370Z" fill="url(#turret)" />
    <path d="M635 0H915L920 200L932 330L938 510L850 530L790 545L700 500L660 520L685 300L620 225Z" fill={Y} />
    <path d="M606 217L745 293L742 322L685 298L635 640L495 560Q500 460 552 380Z" fill="#c9c822" />
    <path d="M685 298L742 322L800 545L700 500L655 600L635 640Z" fill={Y} />
    <path d="M510 210L565 180L610 205L590 290L570 312L530 265Z" fill="#a6a424" />
    <path d="M520 215L590 262L572 310L530 268Z" fill="#77751e" />
    <path d="M520 360Q552 352 550 385Q488 480 498 590Q508 645 545 670L490 652Q436 580 447 490Q462 405 520 360Z" fill={D} />
    <path d="M495 560Q505 640 560 680L640 715L640 600Z" fill="url(#under)" />
    <path d="M875 500L900 420L925 470L938 520Z" fill="#c9c822" />
    <path d="M660 655L720 600L790 650L720 700Z" fill={Y} /><path d="M635 650L680 598L715 625L665 690Z" fill={B} />
    <path d="M680 502L815 555L940 558V735L815 688L668 590Z" fill="url(#tubeB)" />
    <path d="M800 552Q850 500 930 518L940 560L860 570Z" fill="#cccb22" />
    <path d="M935 512L1145 635L1142 680L1112 690V815L1050 802L985 805L940 735V558Z" fill={Y} />
    <path d="M1112 685L1145 668L1142 740L1112 812Z" fill="#6a6820" /><path d="M1085 640L1125 632L1140 645L1110 655Z" fill="#77751e" />
    <path d="M668 592L820 690L700 622Z" fill="#66641c" />
    <path d="M590 690L650 735L620 730Z" fill="#55531c" />
    <path d="M640 730Q700 720 770 690L780 702Q720 730 650 738Z" fill="#77751e" />
    <path d="M432 850L480 838L520 872L590 868L572 900L602 935L575 955L522 930L460 952L445 935L482 908L435 882Z" fill={Y} />
    <path d="M470 880L490 875L488 905Z" fill={B} />
    <circle cx="570" cy="792" r="38" fill="#262626" />
    <g stroke="#062c06" strokeWidth="6" strokeLinejoin="round">
      <path d="M724 840H752V1012H724Z" fill="#12d812" /><path d="M712 765L737 748L762 765V825L750 842H724L712 825Z" fill="#10f010" />
      <path d="M730 1005L745 1025L600 1112L586 1090Z" fill="#12c812" /><path d="M585 1090L598 1115L545 1160L505 1162L502 1130L560 1100Z" fill="#10f010" />
      <path d="M748 1005L738 1025L885 1112L898 1090Z" fill="#12c812" /><path d="M905 1092L970 1130L968 1160L940 1162L890 1120Z" fill="#10f010" />
      <path d="M737 755V1010M590 1102L520 1140M890 1102L950 1140M737 1012L590 1100M737 1012L890 1100" fill="none" strokeWidth="4" />
    </g>
    <path d="M510 1140L540 1105L530 1135L550 1158L520 1150Z" fill="#dfffdf" />
  </g>
);

const RobotArm = () => (
  <g transform="translate(900 700) scale(.5357 .3333)">
    <path d="M1140 860H1318L1322 1350V1400L1132 1380L1140 1180Z" fill={Y} />
    <path d="M1095 112L1254 243L1228 375L1258 405L1252 530L1135 795L1085 765L1000 700L950 655L940 560V370L945 300L968 232L1003 232Z" fill={Y} />
    <path d="M960 320L985 300L1018 350L960 360ZM1080 350L1142 315L1135 355L1112 400ZM1085 500L1110 510L1100 540ZM1090 600L1130 600L1110 705L1085 700ZM1045 620L1080 640L1085 700L1045 680Z" fill="#e2e222" />
    <path d="M960 320L985 298L975 312ZM1225 390L1234 358L1258 378V405Z" fill="#48461c" />
    <path d="M980 230Q1085 335 1160 370T1256 403M1095 112L1252 243" stroke="#2a2a14" strokeWidth="4" fill="none" />
    <path d="M940 370Q1000 340 1040 400Q1085 470 1060 570L1020 600Z" fill="url(#turretA)" />
    <ellipse cx="1018" cy="684" rx="14" ry="18" fill="#b07820" />
    <path d="M925 410Q950 350 988 368Q1052 430 1048 540Q1042 605 1003 635L985 600Q1010 560 995 500Q975 420 925 410Z" fill={D} />
    <path d="M868 478Q895 410 940 415Q990 440 1000 530Q1008 590 960 650L925 660L850 520Z" fill="url(#turretA)" />
    <path d="M855 505L650 695L600 775L672 880L940 645Q965 560 905 480Z" fill="url(#tube)" />
    <path d="M868 480Q930 480 950 560Q955 620 940 655L925 655Q950 560 905 500L860 510Z" fill="#e6e622" />
    <path d="M370 932Q370 835 440 800Q485 808 502 860L540 860L600 940L565 960V1020L555 1048L470 1125L440 1130L430 990Z" fill="#c8c820" />
    <path d="M600 780L650 695L680 725L682 800L672 880L640 882L602 955L560 950L505 870L540 797L585 785Z" fill="#cfcf20" />
    <path d="M620 790L655 745L678 800L670 830Z" fill="#ffff10" />
    <path d="M560 905L600 950L575 958L545 930Z" fill="#8a881c" />
    <path d="M530 830L580 865L525 895Z" fill={Y} />
    <path d="M470 1010L563 955L562 1030L552 1052L472 1122L445 1085Z" fill={Y} />
    <path d="M372 890Q400 815 440 803L400 850L380 900ZM412 925Q415 862 470 842L430 890L420 930Z" fill={D} />
    <path d="M380 925Q430 935 445 1010V1105L412 1120L408 1155L345 1205L330 1232L275 1270L218 1310L205 1290L150 1332L108 1240L115 1210L148 1180L165 1130L222 1058L255 1025L315 970L352 955Z" fill={D} />
    <path d="M230 1055Q300 1110 310 1240M300 985Q375 1060 378 1180M350 958Q410 1010 412 1130" stroke="#171717" strokeWidth="5" fill="none" />
    <path d="M165 1135L222 1060Q280 1120 290 1250L240 1290Z" fill="#333" />
    <path d="M325 978Q395 1040 398 1160L386 1166Q378 1050 315 988Z" fill="#e2e222" />
    <path d="M268 1022Q338 1080 341 1190L318 1230Q305 1110 245 1048Z" fill="#d9781e" />
    <path d="M290 1095L322 1078M310 1195L340 1185" stroke="#3a2410" strokeWidth="4" />
    <path d="M170 1250L215 1190L240 1230L215 1310ZM115 1210L190 1175L200 1190L130 1260Z" fill="#1e1e1e" />
    <path d="M188 1240L198 1225L200 1250ZM208 1222L216 1215L214 1235Z" fill="#aaa" />
    <ellipse cx="105" cy="1300" rx="42" ry="69" fill="url(#ball)" />
    <path d="M1215 465L1262 530Q1180 540 1150 650L1136 790L1105 765L1085 735L1088 710L1120 700Q1118 540 1215 465Z" fill={D} />
    <path d="M1142 660Q1160 530 1225 512Q1262 520 1300 570Q1330 595 1327 650L1318 880L1150 880L1135 790Z" fill="url(#shoulder)" />
    <path d="M1215 640Q1235 580 1300 568Q1328 595 1327 650L1325 780L1318 850L1210 940L1148 878L1135 785L1190 755Z" fill={Y} />
    <path d="M1200 930L1318 842V935L1212 1030L1142 945Z" fill="#bebd22" />
    <path d="M1148 872L1190 905L1208 1018L1143 945Z" fill="#868420" />
  </g>
);

const AxisTriad = () => (
  <g>
    <path d="M687 1738V1787M687 1787L648 1810M687 1787L730 1810" stroke="#2a28c8" strokeWidth="2" fill="none" />
    <g fill="#2a28c8" fontFamily="Liberation Sans, sans-serif" fontSize="28">
      <text x="684" y="1740">Z</text>
      <text x="645" y="1810">X</text>
      <text x="725" y="1810">Y</text>
    </g>
  </g>
);

const RobotScene = () => (
  <Scene viewBox="634 303 1734 1545" preserveAspectRatio="xMidYMid slice" role="img" aria-label="M-710iC/70">
    <defs>
      <linearGradient id="tube" gradientUnits="userSpaceOnUse" x1="740" y1="600" x2="830" y2="760">
        <stop offset="0" stopColor="#c4c420" /><stop offset=".4" stopColor="#e4e420" /><stop offset=".75" stopColor="#b0b01e" /><stop offset="1" stopColor="#5e5c14" />
      </linearGradient>
      <linearGradient id="turretA" x1="0" y1="0" x2="1" y2="1">
        <stop offset="0" stopColor="#a8a71e" /><stop offset=".5" stopColor="#e2e222" /><stop offset="1" stopColor="#b4b31e" />
      </linearGradient>
      <linearGradient id="shoulder" x1="0" y1="1" x2="1" y2="0">
        <stop offset=".2" stopColor="#b4b31e" /><stop offset=".5" stopColor="#dddd20" /><stop offset=".75" stopColor="#b4b31e" /><stop offset="1" stopColor="#4a4814" />
      </linearGradient>
      <linearGradient id="turret" x1="0" y1="0" x2="0" y2="1">
        <stop offset="0" stopColor="#dddd20" /><stop offset=".7" stopColor="#d4d420" /><stop offset="1" stopColor="#8c8a1c" />
      </linearGradient>
      <linearGradient id="under" x1="0" y1="0" x2="0" y2="1">
        <stop offset="0" stopColor="#c9c822" /><stop offset="1" stopColor="#6a681a" />
      </linearGradient>
      <linearGradient id="tubeB" x1=".6" y1="0" x2=".4" y2="1">
        <stop offset="0" stopColor="#d0d020" /><stop offset=".5" stopColor="#e2e222" /><stop offset="1" stopColor="#c2c11f" />
      </linearGradient>
      <radialGradient id="ball">
        <stop offset=".4" stopColor="#08f808" /><stop offset="1" stopColor="#089808" />
      </radialGradient>
    </defs>
    <FloorLines />
    <RobotBase />
    <RobotArm />
    <AxisTriad />
  </Scene>
);

const CenterNote = styled(CalloutText)`
  position: absolute;
  left: 48%;
  bottom: 296px;
`;

/* ---------- page ---------- */

const menus = ["文件(F)", "编辑(E)", "视图(V)", "工作单元(C)", "机器人(R)", "示教(T)", "试运行(S)", "项目(P)", "工具(O)", "窗口(W)", "帮助(H)"];

export default function App() {
  return (
    <>
      <Global />
      <Desktop>
        <AppWindow>
          <TitleBar>
            <Icon name="logo" />
            <Title>ROBOGUIDE - test_sixAxis</Title>
            <WindowButtons>
              <WindowButton aria-label="最小化"><svg width="24" height="28"><path d="M0 14h23" stroke="#222" strokeWidth="2" /></svg></WindowButton>
              <WindowButton aria-label="最大化"><svg width="24" height="24"><path d="M1 1h22v22H1z" stroke="#222" strokeWidth="2" fill="none" /></svg></WindowButton>
              <WindowButton aria-label="关闭"><svg width="24" height="24"><path d="M1 1l22 22M23 1L1 23" stroke="#333" strokeWidth="2" /></svg></WindowButton>
            </WindowButtons>
            <CalloutRow $l={-8} $t={4} $w={826} $h={62} $pad={182}><CalloutText>软件名称-项目名称</CalloutText></CalloutRow>
          </TitleBar>
          <Chrome>
            <MenuBar>
              {menus.map((m) => <MenuButton key={m}>{m}</MenuButton>)}
            </MenuBar>
            {strips.map((s, i) => (
              <ToolStrip key={i} $end={s.end}>
                <Grip />
                {s.tools.map((t, j) => <ToolItem key={j} tool={t} />)}
              </ToolStrip>
            ))}
            <CalloutRow $l={-8} $t={2} $w={1798} $h={47} $pad={27}><CalloutText>菜单栏</CalloutText></CalloutRow>
            <CalloutRow $l={7} $t={56} $w={1798} $h={168} $pad={27}><CalloutText>工具栏</CalloutText></CalloutRow>
          </Chrome>
          <Main>
            <SidePanel>
              <PanelHead>
                <PanelStrip>
                  <ToolButton aria-label="停靠"><Icon name="dock" /></ToolButton>
                  <LabeledButton><svg width="30" height="36" viewBox="0 0 30 36" aria-hidden="true"><path d="M1 17L13 6v5h16v12H13v5z" fill="#111" /></svg>返回</LabeledButton>
                  <ToolButton $w={27} aria-label="更多"><Caret /></ToolButton>
                  <LabeledButton $muted><svg width="30" height="36" viewBox="0 0 30 36" aria-hidden="true"><path d="M29 17L17 6v5H1v12h16v5z" fill="#999" /></svg>前进</LabeledButton>
                  <LabeledButton><Icon name="star" />添加</LabeledButton>
                  <Divider $h={56} />
                  <ToolButton aria-label="列表"><Icon name="list" /></ToolButton>
                  <ToolButton aria-label="刷新"><Icon name="refresh" /></ToolButton>
                  <ToolButton aria-label="关于"><Icon name="about" /></ToolButton>
                </PanelStrip>
              </PanelHead>
              <TreeBox>
                <Tree role="tree">{nodes.map((n) => <TreeNode key={n.text} node={n} />)}</Tree>
                <CalloutColumn $l={-8} $t={-8} $w={571} $b={57} $pad={140}><CalloutText>目录树</CalloutText></CalloutColumn>
              </TreeBox>
              <Tabs>
                <Tab $on>ROBOGUIDE</Tab>
                <Tab>收藏夹</Tab>
              </Tabs>
            </SidePanel>
            <Workspace>
              <RobotScene />
              <CenterNote>工作区</CenterNote>
              <Callout $l={-4} $r={-11} $t={5} $b={1} />
            </Workspace>
          </Main>
          <StatusBar>
            <StatusCell $w={383}><Icon name="cabinet" />Robot Controller1</StatusCell>
            <StatusCell $w={340}><Icon name="pendant" /></StatusCell>
            <StatusCell $w={630} $dim>&lt;无机器人错误&gt;</StatusCell>
            <StatusCell $w={168}><Icon name="status" />100%</StatusCell>
            <StatusCell>GP:1 - M-710iC/70<Icon name="tree" /><Icon name="sizeGrip" size={28} /></StatusCell>
            <CalloutRow $l={-8} $r={-6} $t={3} $b={-1} $pad={502}><CalloutText>状态栏</CalloutText></CalloutRow>
          </StatusBar>
        </AppWindow>
      </Desktop>
    </>
  );
}
